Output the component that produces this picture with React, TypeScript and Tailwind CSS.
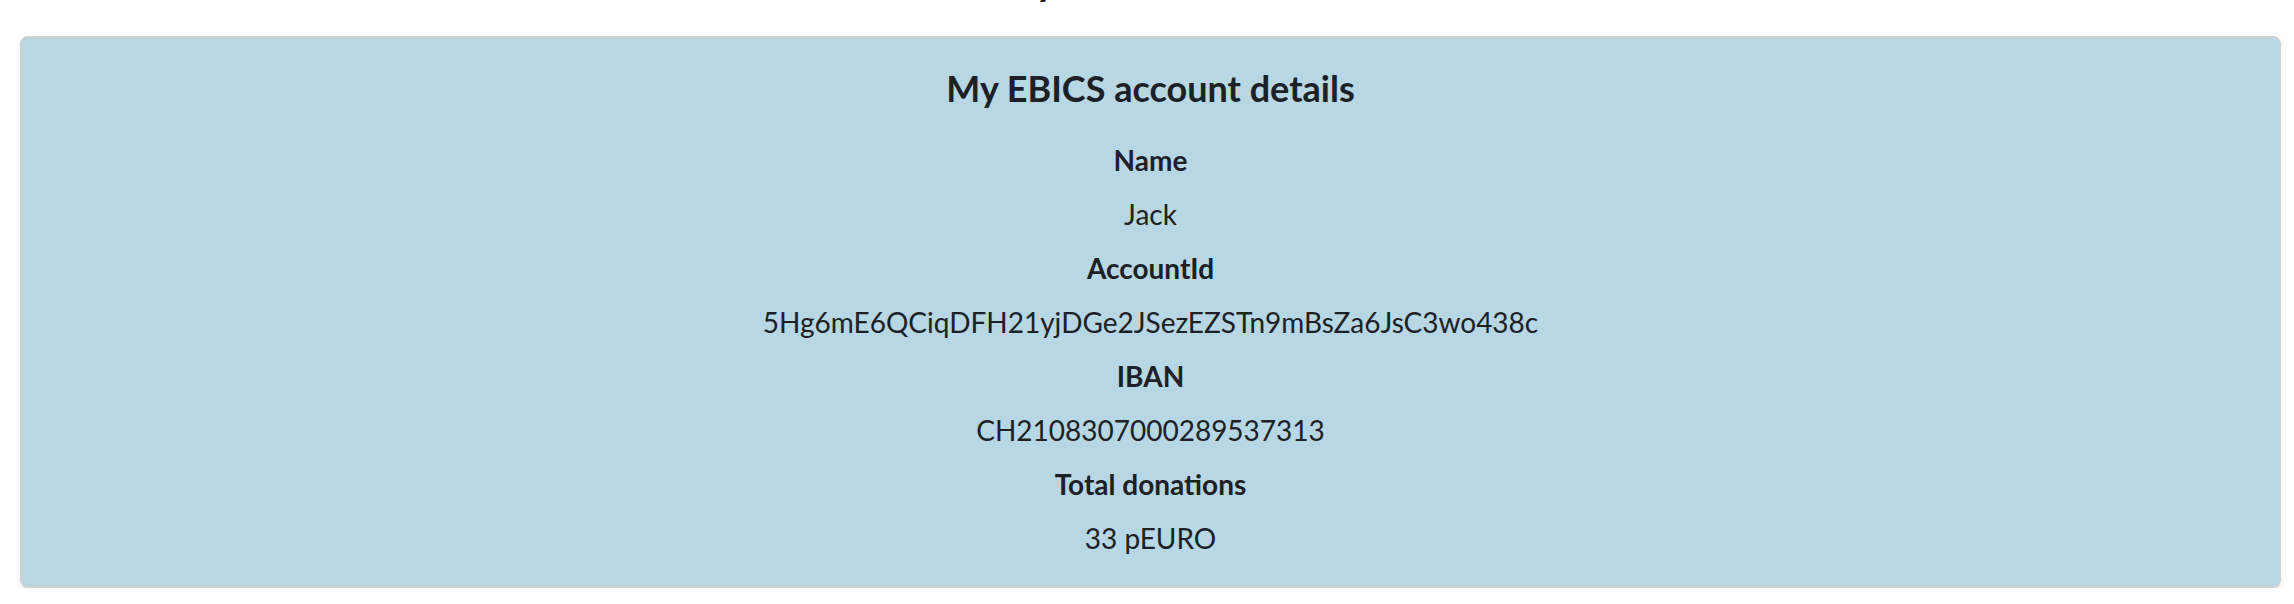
const rows = [
  { label: 'Name', value: 'Jack' },
  { label: 'AccountId', value: '5Hg6mE6QCiqDFH21yjDGe2JSezEZSTn9mBsZa6JsC3wo438c' },
  { label: 'IBAN', value: 'CH2108307000289537313' },
  { label: 'Total donations', value: '33 pEURO' },
]

export default function App() {
  return (
    <div className="min-h-screen bg-white font-['Lato','Liberation_Sans',sans-serif] text-[#1d2125] pl-[20px] pr-[13px]">
      {/* page heading, scrolled mostly out of view */}
      <h1 className="-mt-[44px] mb-[32px] text-center text-[40px] leading-[48px] font-bold">My bank account</h1>

      <div className="rounded-[8px] border-2 border-[#d0d0d0] bg-[#b6d7e3] pt-[29px] pb-[21px] text-center shadow-[0_3px_6px_rgba(0,0,0,0.08)]">
        <h2 className="text-[36px] leading-[42px] font-bold mb-[24px]">My EBICS account details</h2>
        <dl>
          {rows.map((r) => (
            <div key={r.label}>
              <dt className="text-[28px] leading-[54px] font-bold">{r.label}</dt>
              <dd className="text-[28px] leading-[54px]">{r.value}</dd>
            </div>
          ))}
        </dl>
      </div>
    </div>
  )
}
